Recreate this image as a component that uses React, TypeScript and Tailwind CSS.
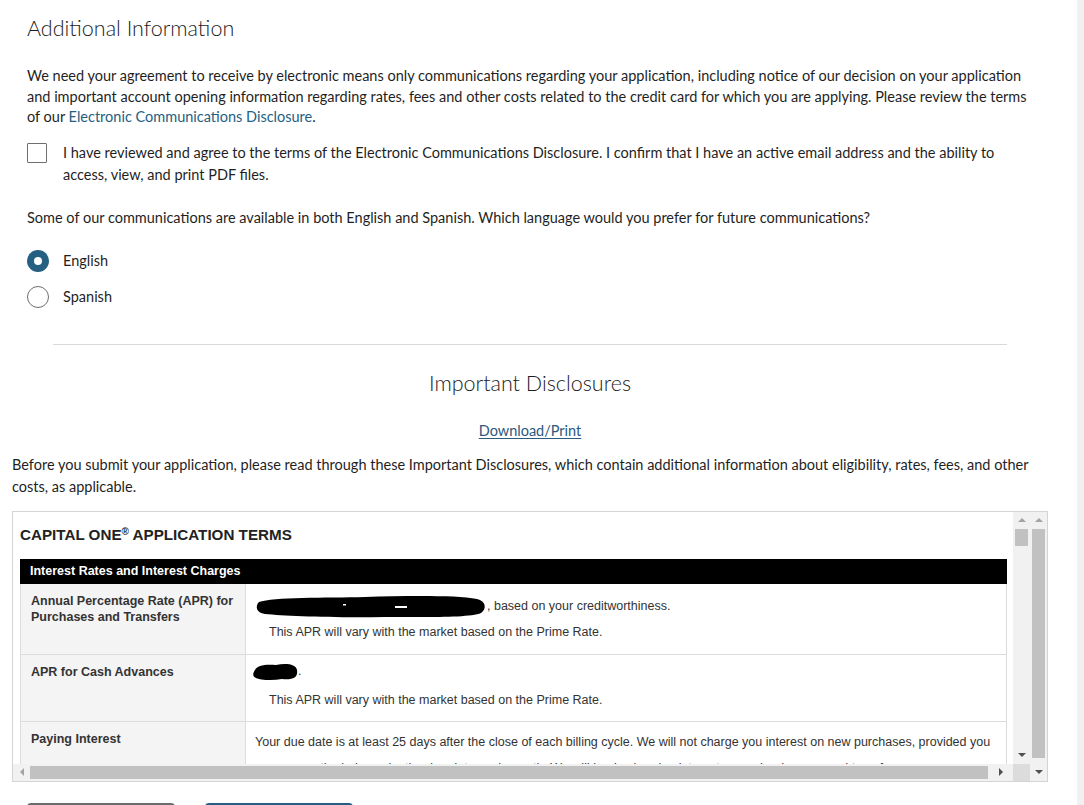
import React from "react";

const body = { fontFamily: "Lato, 'Noto Sans', sans-serif" };
const arial = { fontFamily: "'Liberation Sans', Arial, sans-serif" };

function Blob1() {
  return (
    <svg width="232" height="28" viewBox="0 0 232 28" className="inline-block align-middle">
      <path
        d="M4 9 C18 4 70 5 110 4 C150 3 200 2 222 6 C231 8 232 16 226 20 C214 25 170 24 130 24 C80 25 30 23 10 21 C1 20 0 13 4 9 Z"
        fill="#000"
      />
      <rect x="88" y="11" width="3" height="1.5" fill="#fff" />
      <rect x="140" y="13" width="12" height="2" fill="#fff" />
    </svg>
  );
}

function Blob2() {
  return (
    <svg width="46" height="20" viewBox="0 0 46 20" className="inline-block align-middle">
      <path d="M3 8 C5 3 14 2 24 3 C34 1 44 2 45 8 C46 15 42 18 30 17 C20 19 8 18 4 16 C0 14 1 11 3 8 Z" fill="#000" />
    </svg>
  );
}

function Tri({ dir, color }: { dir: "up" | "down" | "left" | "right"; color: string }) {
  const pts =
    dir === "up"
      ? "0,5 4,1 8,5"
      : dir === "down"
      ? "0,1 8,1 4,5"
      : dir === "left"
      ? "5,0 5,8 1,4"
      : "1,0 1,8 5,4";
  const w = dir === "up" || dir === "down" ? 8 : 6;
  const h = dir === "up" || dir === "down" ? 6 : 8;
  return (
    <svg width={w} height={h} viewBox={`0 0 ${w} ${h}`}>
      <polygon points={pts} fill={color} />
    </svg>
  );
}

export default function App() {
  return (
    <div className="flex h-[805px] w-[1084px] overflow-hidden bg-white">
      <div className="w-[1077px] shrink-0">
        {/* Additional Information */}
        <div className="px-[27px] text-[#1f1f1f]" style={body}>
          <h1 className="pt-[14px] text-[21.5px] font-light leading-[28px] text-[#1c1c1c]">Additional Information</h1>
          <p className="mt-[24px] text-[14.5px] leading-[20.5px] whitespace-nowrap">
            We need your agreement to receive by electronic means only communications regarding your application, including notice of our decision on your application
            <br />
            and important account opening information regarding rates, fees and other costs related to the credit card for which you are applying. Please review the terms
            <br />
            of our <span className="text-[#255f82]">Electronic Communications Disclosure</span>.
          </p>
          <div className="mt-[14px] flex">
            <div className="mt-[1px] h-[20px] w-[20px] shrink-0 rounded-[1px] border border-[#6f6f6f] bg-white" />
            <p className="ml-[16px] text-[14.5px] leading-[22px] whitespace-nowrap">
              I have reviewed and agree to the terms of the Electronic Communications Disclosure. I confirm that I have an active email address and the ability to
              <br />
              access, view, and print PDF files.
            </p>
          </div>
          <p className="mt-[21px] text-[14.5px] leading-[22px] whitespace-nowrap">
            Some of our communications are available in both English and Spanish. Which language would you prefer for future communications?
          </p>
          <div className="mt-[21px] flex h-[22px] items-center">
            <div className="flex h-[22px] w-[22px] items-center justify-center rounded-full bg-[#255f82]">
              <div className="h-[8px] w-[8px] rounded-full bg-white" />
            </div>
            <span className="ml-[14px] text-[14.5px]">English</span>
          </div>
          <div className="mt-[14px] flex h-[22px] items-center">
            <div className="h-[22px] w-[22px] rounded-full border border-[#6f6f6f] bg-white" />
            <span className="ml-[14px] text-[14.5px]">Spanish</span>
          </div>
        </div>

        {/* Important Disclosures */}
        <div className="mx-[12px] w-[1036px]" style={body}>
          <div className="mx-[41px] mt-[36px] h-px bg-[#d9d9d9]" />
          <h2 className="mt-[24px] text-center text-[21.5px] font-light leading-[28px] text-[#1c1c1c]">Important Disclosures</h2>
          <div className="mt-[24px] text-center text-[14.5px] leading-[20px]">
            <span className="text-[#2a5a80] underline underline-offset-2">Download/Print</span>
          </div>
          <p className="mt-[13px] text-[14.5px] leading-[22px] whitespace-nowrap text-[#1f1f1f]">
            Before you submit your application, please read through these Important Disclosures, which contain additional information about eligibility, rates, fees, and other
            <br />
            costs, as applicable.
          </p>

          {/* Terms box */}
          <div className="mt-[13px] flex h-[271px] border border-[#d4d4d4]">
            <div className="flex w-[1017px] flex-col">
              <div className="flex h-[252px]">
                <div className="h-[252px] w-[1000px] overflow-hidden bg-white pl-[7px] text-[#333]" style={arial}>
                  <div className="pt-[14px] text-[15.2px] font-bold leading-[18px] text-[#222]">
                    CAPITAL ONE<sup className="text-[10px]">®</sup> APPLICATION TERMS
                  </div>
                  <div className="mt-[15px] w-[987px]">
                    <div className="flex h-[25px] items-center bg-black pl-[10px] text-[12.5px] font-bold text-white">
                      Interest Rates and Interest Charges
                    </div>
                    <div className="flex h-[71px] border-x border-b border-[#dcdcdc]">
                      <div className="w-[225px] shrink-0 border-r border-[#dcdcdc] bg-[#f4f4f4] pl-[10px] pt-[9px] text-[12.5px] font-bold leading-[16px]">
                        Annual Percentage Rate (APR) for
                        <br />
                        Purchases and Transfers
                      </div>
                      <div className="pl-[9px] pt-[9px] text-[12.5px]">
                        <div className="flex h-[28px] items-center">
                          <Blob1 />
                          <span>, based on your creditworthiness.</span>
                        </div>
                        <div className="ml-[14px] h-[22px] leading-[22px]">This APR will vary with the market based on the Prime Rate.</div>
                      </div>
                    </div>
                    <div className="flex h-[67px] border-x border-b border-[#dcdcdc]">
                      <div className="w-[225px] shrink-0 border-r border-[#dcdcdc] bg-[#f4f4f4] pl-[10px] pt-[9px] text-[12.5px] font-bold leading-[16px]">
                        APR for Cash Advances
                      </div>
                      <div className="pl-[6px] pt-[7px] text-[12.5px]">
                        <div className="flex h-[20px] items-center">
                          <Blob2 />
                          <span>.</span>
                        </div>
                        <div className="ml-[17px] mt-[7px] h-[22px] leading-[22px]">This APR will vary with the market based on the Prime Rate.</div>
                      </div>
                    </div>
                    <div className="flex h-[60px] border-x border-[#dcdcdc]">
                      <div className="w-[225px] shrink-0 border-r border-[#dcdcdc] bg-[#f4f4f4] pl-[10px] pt-[9px] text-[12.5px] font-bold leading-[16px]">
                        Paying Interest
                      </div>
                      <div className="pl-[9px] pt-[9px] text-[12.5px] leading-[22px] whitespace-nowrap">
                        <div>
                          Your due date is at least 25 days after the close of each billing cycle. We will not charge you interest on new purchases, provided you
                        </div>
                        <div className="mt-[4px]">
                          pay your entire balance by the due date each month. We will begin charging interest on cash advances and transfers
                        </div>
                      </div>
                    </div>
                  </div>
                </div>
                {/* inner vertical scrollbar */}
                <div className="flex w-[17px] flex-col items-center bg-[#f1f1f1]">
                  <div className="flex h-[17px] items-center justify-center">
                    <Tri dir="up" color="#a3a3a3" />
                  </div>
                  <div className="h-[17px] w-[13px] bg-[#c1c1c1]" />
                  <div className="flex-1" />
                  <div className="flex h-[17px] items-center justify-center">
                    <Tri dir="down" color="#505050" />
                  </div>
                </div>
              </div>
              {/* horizontal scrollbar */}
              <div className="flex h-[17px]">
                <div className="flex w-[1000px] items-center bg-[#f1f1f1]">
                  <div className="flex w-[17px] items-center justify-center">
                    <Tri dir="left" color="#a3a3a3" />
                  </div>
                  <div className="h-[13px] w-[958px] bg-[#c1c1c1]" />
                  <div className="flex flex-1 items-center justify-center">
                    <Tri dir="right" color="#505050" />
                  </div>
                </div>
                <div className="w-[17px] bg-[#dcdcdc]" />
              </div>
            </div>
            {/* outer vertical scrollbar */}
            <div className="flex w-[17px] flex-col items-center bg-[#f1f1f1]">
              <div className="flex h-[17px] items-center justify-center">
                <Tri dir="up" color="#a3a3a3" />
              </div>
              <div className="h-[229px] w-[13px] bg-[#c1c1c1]" />
              <div className="flex-1" />
              <div className="flex h-[17px] items-center justify-center">
                <Tri dir="down" color="#505050" />
              </div>
            </div>
          </div>

          <div className="ml-[15px] mt-[21px] flex gap-[30px]">
            <div className="h-[44px] w-[148px] rounded-[4px] border-2 border-[#6b6b6b] bg-white" />
            <div className="h-[44px] w-[148px] rounded-[4px] border-2 border-[#255f82] bg-[#255f82]" />
          </div>
        </div>
      </div>
      <div className="w-[7px] shrink-0 bg-[#f1f1f1]" />
    </div>
  );
}
